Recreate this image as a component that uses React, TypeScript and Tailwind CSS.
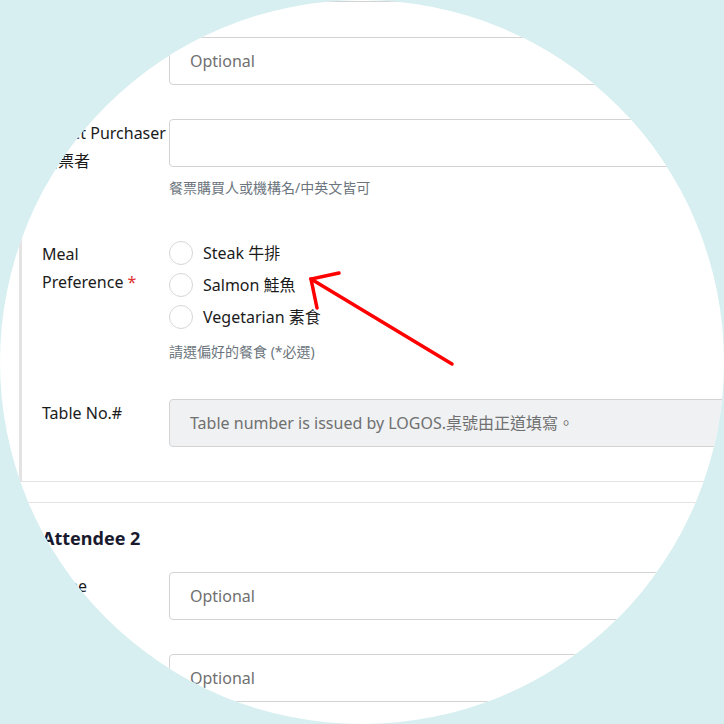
import React from "react";

const font = "font-['Noto_Sans','Noto_Sans_CJK_TC',sans-serif]";

const TextInput = ({ placeholder = "", disabled = false }: { placeholder?: string; disabled?: boolean }) => (
  <div
    className={`h-[48px] w-[700px] rounded-[4px] border border-[#d3d3d3] flex items-center pl-5 text-[16px] text-[#707070] ${
      disabled ? "bg-[#eff1f3]" : "bg-white"
    }`}
  >
    {placeholder}
  </div>
);

const Radio = ({ label }: { label: string }) => (
  <div className="flex items-center h-[32px]">
    <span className="w-[24px] h-[24px] rounded-full border border-[#d6d6d6] bg-white" />
    <span className="ml-[10px] text-[16px] text-[#1b1b1b]">{label}</span>
  </div>
);

const Row = ({ label, children }: { label: React.ReactNode; children: React.ReactNode }) => (
  <div className="flex">
    <div className="w-[127px] shrink-0 text-[16px] leading-7 text-[#1b1b1b]">{label}</div>
    <div>{children}</div>
  </div>
);

export default function App() {
  return (
    <div className={`relative w-[724px] h-[724px] bg-[#d7eff0] overflow-hidden ${font}`}>
      <div className="absolute inset-0 rounded-full bg-white overflow-hidden">
        <div className="w-[1100px]">
          <div className="mt-[1px] h-[1px] bg-[#d3d3d3]" />

          {/* attendee card */}
          <div className="ml-[19px] border-l-[3px] border-b border-l-[#e3e3e3] border-b-[#e3e3e3] pl-5 pt-[35px] pb-[34px]">
            <Row label="Email">
              <TextInput placeholder="Optional" />
            </Row>

            <div className="mt-[34px]">
              <Row
                label={
                  <>
                    Ticket Purchaser
                    <br />
                    購票者
                  </>
                }
              >
                <TextInput />
                <p className="mt-[11px] text-[14px] leading-5 text-[#6c757d]">餐票購買人或機構名/中英文皆可</p>
              </Row>
            </div>

            <div className="mt-[39px]">
              <Row
                label={
                  <div className="pt-[3px]">
                    Meal
                    <br />
                    Preference <span className="text-[#e03131]">*</span>
                  </div>
                }
              >
                <Radio label="Steak 牛排" />
                <Radio label="Salmon 鮭魚" />
                <Radio label="Vegetarian 素食" />
                <p className="mt-[9px] text-[14px] leading-5 text-[#6c757d]">請選偏好的餐食 (*必選)</p>
              </Row>
            </div>

            <div className="mt-[37px]">
              <Row label="Table No.#">
                <TextInput placeholder="Table number is issued by LOGOS.桌號由正道填寫。" disabled />
              </Row>
            </div>
          </div>

          <div className="mt-[20px] ml-[19px] border-t border-[#e3e3e3] pl-[23px] pt-[21px]">
            <h3 className="text-[18px] font-bold leading-7 text-[#1a1a2e]">Attendee 2</h3>
            <div className="mt-[20px]">
              <Row label="Name">
                <TextInput placeholder="Optional" />
              </Row>
            </div>
            <div className="mt-[34px]">
              <Row label="Email">
                <TextInput placeholder="Optional" />
              </Row>
            </div>
          </div>
        </div>
      </div>

      <svg className="absolute inset-0" width="724" height="724" viewBox="0 0 724 724" fill="none">
        <path d="M452 364 L311 279" stroke="#ff0000" strokeWidth="3.5" strokeLinecap="round" />
        <path d="M339 273 L311 279 L317 308" stroke="#ff0000" strokeWidth="3.5" strokeLinecap="round" strokeLinejoin="miter" />
      </svg>
    </div>
  );
}
